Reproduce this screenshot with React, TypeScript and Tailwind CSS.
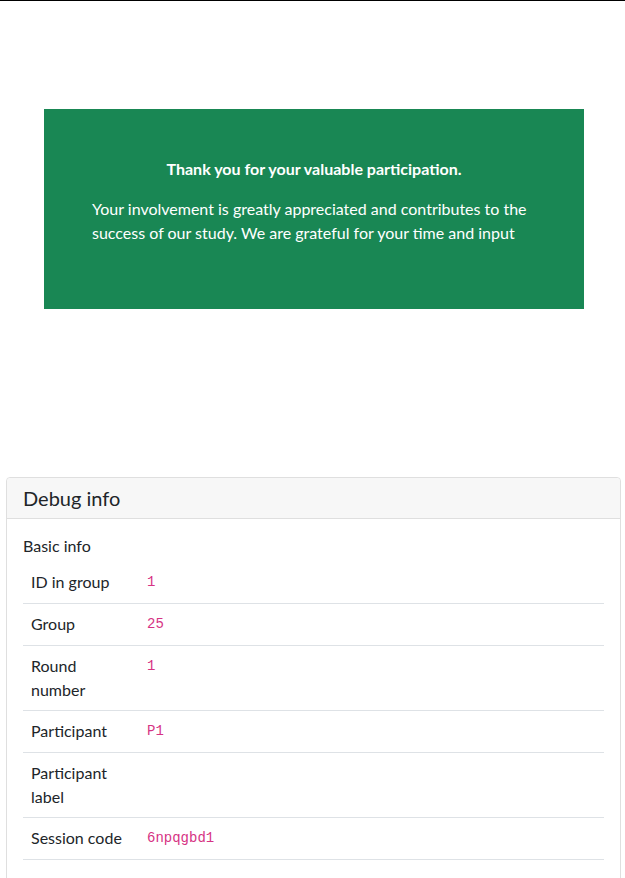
import React from "react";

const rows: { label: React.ReactNode; value?: string }[] = [
  { label: "ID in group", value: "1" },
  { label: "Group", value: "25" },
  { label: "Round number", value: "1" },
  { label: "Participant", value: "P1" },
  { label: "Participant label" },
  { label: "Session code", value: "6npqgbd1" },
];

export default function App() {
  return (
    <div
      className="min-h-[878px] border-t border-black bg-white text-[#212529]"
      style={{ fontFamily: "Lato, 'Open Sans', sans-serif" }}
    >
      <div className="ml-[44px] mt-[108px] w-[540px] bg-[#198754] px-[48px] py-[48px] text-white">
        <p className="text-center text-base font-bold leading-6">Thank you for your valuable participation.</p>
        <p className="mt-4 mb-4 text-base leading-6">
          Your involvement is greatly appreciated and contributes to the success of our study. We are grateful for
          your time and input
        </p>
      </div>

      <div className="mt-[168px] ml-[6px] mr-[4px] rounded border border-[#dfdfdf]">
        <div className="rounded-t border-b border-[#dfdfdf] bg-[#f7f7f7] px-4 py-2 text-[20px] leading-6">
          Debug info
        </div>
        <div className="px-4 pt-[15px] pb-12">
          <div className="mb-[4px] text-base leading-6">Basic info</div>
          <table className="w-full border-collapse text-base leading-6">
            <tbody>
              {rows.map((r, i) => (
                <tr key={i} className="border-b border-[#dee2e6]">
                  <td className="w-[116px] px-2 py-2 align-top">{r.label}</td>
                  <td className="px-2 py-2 align-top">
                    {r.value && (
                      <code
                        className="inline-block align-top text-[14px] leading-[25px] text-[#d63384]"
                        style={{ fontFamily: "'Liberation Mono', monospace" }}
                      >
                        {r.value}
                      </code>
                    )}
                  </td>
                </tr>
              ))}
            </tbody>
          </table>
        </div>
      </div>
    </div>
  );
}
